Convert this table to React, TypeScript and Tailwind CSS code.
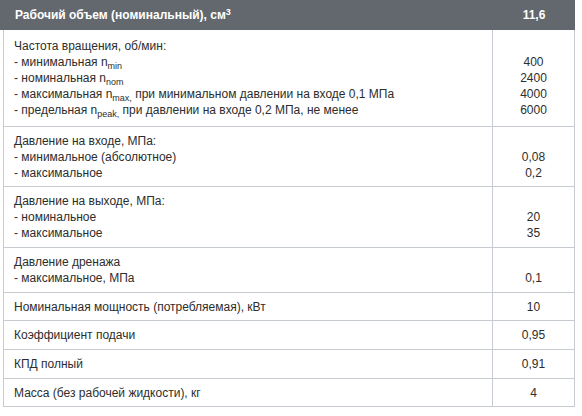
import React from "react";

const font = { fontFamily: '"Liberation Sans", Arial, sans-serif' };

function Sub({ children }: { children: React.ReactNode }) {
  return <span className="relative top-[3px] text-[9px] leading-none">{children}</span>;
}

type Row = { left: React.ReactNode[]; right: React.ReactNode[]; pad?: string };

const rows: Row[] = [
  {
    left: [
      "Частота вращения, об/мин:",
      <>- минимальная n<Sub>min</Sub></>,
      <>- номинальная n<Sub>nom</Sub></>,
      <>- максимальная n<Sub>max,</Sub> при минимальном давлении на входе 0,1 МПа</>,
      <>- предельная n<Sub>peak,</Sub> при давлении на входе 0,2 МПа, не менее</>,
    ],
    right: ["\u00a0", "400", "2400", "4000", "6000"],
    pad: "py-[8px]",
  },
  {
    left: ["Давление на входе, МПа:", "- минимальное (абсолютное)", "- максимальное"],
    right: ["\u00a0", "0,08", "0,2"],
    pad: "pt-[6px] pb-[5px]",
  },
  {
    left: ["Давление на выходе, МПа:", "- номинальное", "- максимальное"],
    right: ["\u00a0", "20", "35"],
  },
  {
    left: ["Давление дренажа", "- максимальное, МПа"],
    right: ["\u00a0", "0,1"],
  },
  { left: ["Номинальная мощность (потребляемая), кВт"], right: ["10"], pad: "pt-[6px] pb-[5px]" },
  { left: ["Коэффициент подачи"], right: ["0,95"] },
  { left: ["КПД полный"], right: ["0,91"] },
  { left: ["Масса (без рабочей жидкости), кг"], right: ["4"], pad: "pt-[6px] pb-[5px]" },
];

export default function App() {
  return (
    <div className="w-[582px] h-[416px] bg-white text-[12px] text-[#2d2d2d]" style={font}>
      <div className="flex h-[30px] w-[575px] items-center bg-[#63686e] font-bold text-white">
        <div className="w-[493px] pl-[15px]">
          Рабочий объем (номинальный), см<span className="relative -top-[4px] text-[9px]">3</span>
        </div>
        <div className="flex-1 text-center">11,6</div>
      </div>
      <div className="ml-[3px] w-[572px] border-x border-[#c5cbd1]">
        {rows.map((r, i) => (
          <div key={i} className="flex border-b border-[#c5cbd1]">
            <div className={`w-[489px] border-r border-[#c5cbd1] pl-[10px] ${r.pad ?? "py-[6px]"}`}>
              {r.left.map((l, j) => (
                <div key={j} className="h-[16px] leading-[16px] whitespace-nowrap">
                  {l}
                </div>
              ))}
            </div>
            <div className={`flex-1 text-center ${r.pad ?? "py-[6px]"}`}>
              {r.right.map((l, j) => (
                <div key={j} className="h-[16px] leading-[16px]">
                  {l}
                </div>
              ))}
            </div>
          </div>
        ))}
      </div>
    </div>
  );
}
